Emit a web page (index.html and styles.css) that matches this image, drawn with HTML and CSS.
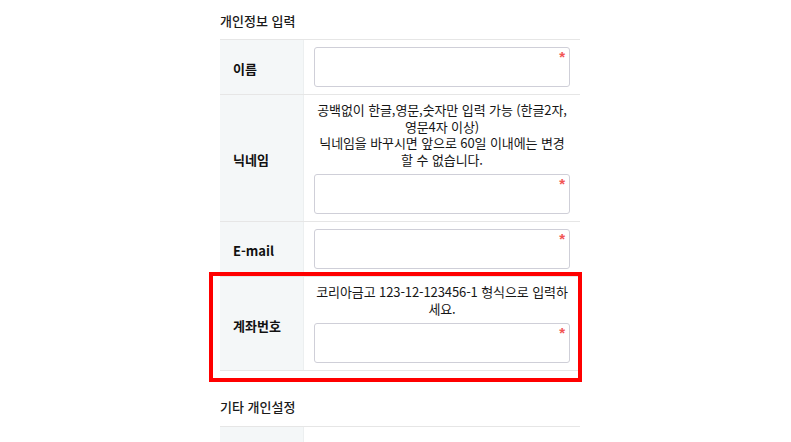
FILE: index.html
```html
<!DOCTYPE html>
<html lang="ko">
<head>
<meta charset="utf-8">
<title>개인정보 입력</title>
<link rel="stylesheet" href="styles.css">
</head>
<body>
<div class="page">
  <h3 class="section-title">개인정보 입력</h3>
  <div class="form-table">
    <div class="row">
      <div class="label">이름</div>
      <div class="field">
        <div class="input-wrap"><input class="input" type="text"><span class="req">*</span></div>
      </div>
    </div>
    <div class="row">
      <div class="label">닉네임</div>
      <div class="field">
        <p class="hint">공백없이 한글,영문,숫자만 입력 가능 (한글2자,<br>영문4자 이상)<br>닉네임을 바꾸시면 앞으로 60일 이내에는 변경<br>할 수 없습니다.</p>
        <div class="input-wrap"><input class="input" type="text"><span class="req">*</span></div>
      </div>
    </div>
    <div class="row">
      <div class="label">E-mail</div>
      <div class="field">
        <div class="input-wrap"><input class="input" type="text"><span class="req">*</span></div>
      </div>
    </div>
    <div class="row row-highlight">
      <div class="label">계좌번호</div>
      <div class="field">
        <p class="hint">코리아금고 123-12-123456-1 형식으로 입력하<br>세요.</p>
        <div class="input-wrap"><input class="input" type="text"><span class="req">*</span></div>
      </div>
      <div class="highlight"></div>
    </div>
  </div>

  <h3 class="section-title second">기타 개인설정</h3>
  <div class="form-table">
    <div class="row">
      <div class="label">메일링서비스</div>
      <div class="field tall"></div>
    </div>
  </div>
</div>
</body>
</html>
```

FILE: styles.css
```css
html, body {
  margin: 0;
  padding: 0;
  overflow: hidden;
  background: #fff;
}
body {
  font-family: "Noto Sans CJK KR", "Noto Sans", sans-serif;
  color: #222;
  font-size: 13px;
}
.page {
  width: 360px;
  margin-left: 220px;
}
.section-title {
  margin: 0;
  padding-top: 11px;
  height: 20px;
  line-height: 20px;
  font-size: 13px;
  font-weight: 500;
  color: #1a1a1a;
  margin-bottom: 8px;
}
.section-title.second {
  padding-top: 26px;
  margin-bottom: 9px;
}
.form-table {
  border-top: 1px solid #e6e6e6;
}
.row {
  display: grid;
  grid-template-columns: 84px 1fr;
  border-bottom: 1px solid #e6e6e6;
}
.row-highlight {
  position: relative;
}
.label {
  background: #f4f7f8;
  border-right: 1px solid #eceff0;
  display: flex;
  align-items: center;
  padding: 3px 0 0 13px;
  font-weight: bold;
  font-size: 13px;
  color: #111;
}
.field {
  padding: 7px 10px;
  display: flex;
  flex-direction: column;
  gap: 6px;
}
.field.tall {
  height: 60px;
}
.hint {
  margin: 0;
  text-align: center;
  font-size: 13px;
  line-height: 16.5px;
  letter-spacing: -0.1px;
  white-space: nowrap;
  color: #161616;
}
.input-wrap {
  position: relative;
}
.input {
  display: block;
  box-sizing: border-box;
  width: 100%;
  height: 40px;
  margin: 0;
  border: 1px solid #cfcfd8;
  border-radius: 3px;
  background: #fff;
  outline: none;
}
.req {
  position: absolute;
  top: 3px;
  right: 5px;
  font-family: "Liberation Sans", sans-serif;
  font-size: 15px;
  font-weight: bold;
  line-height: 14px;
  color: #f25555;
}
.highlight {
  position: absolute;
  top: -5px;
  left: -11px;
  right: -2px;
  bottom: -12px;
  border: 4px solid #f00;
  pointer-events: none;
}
```
